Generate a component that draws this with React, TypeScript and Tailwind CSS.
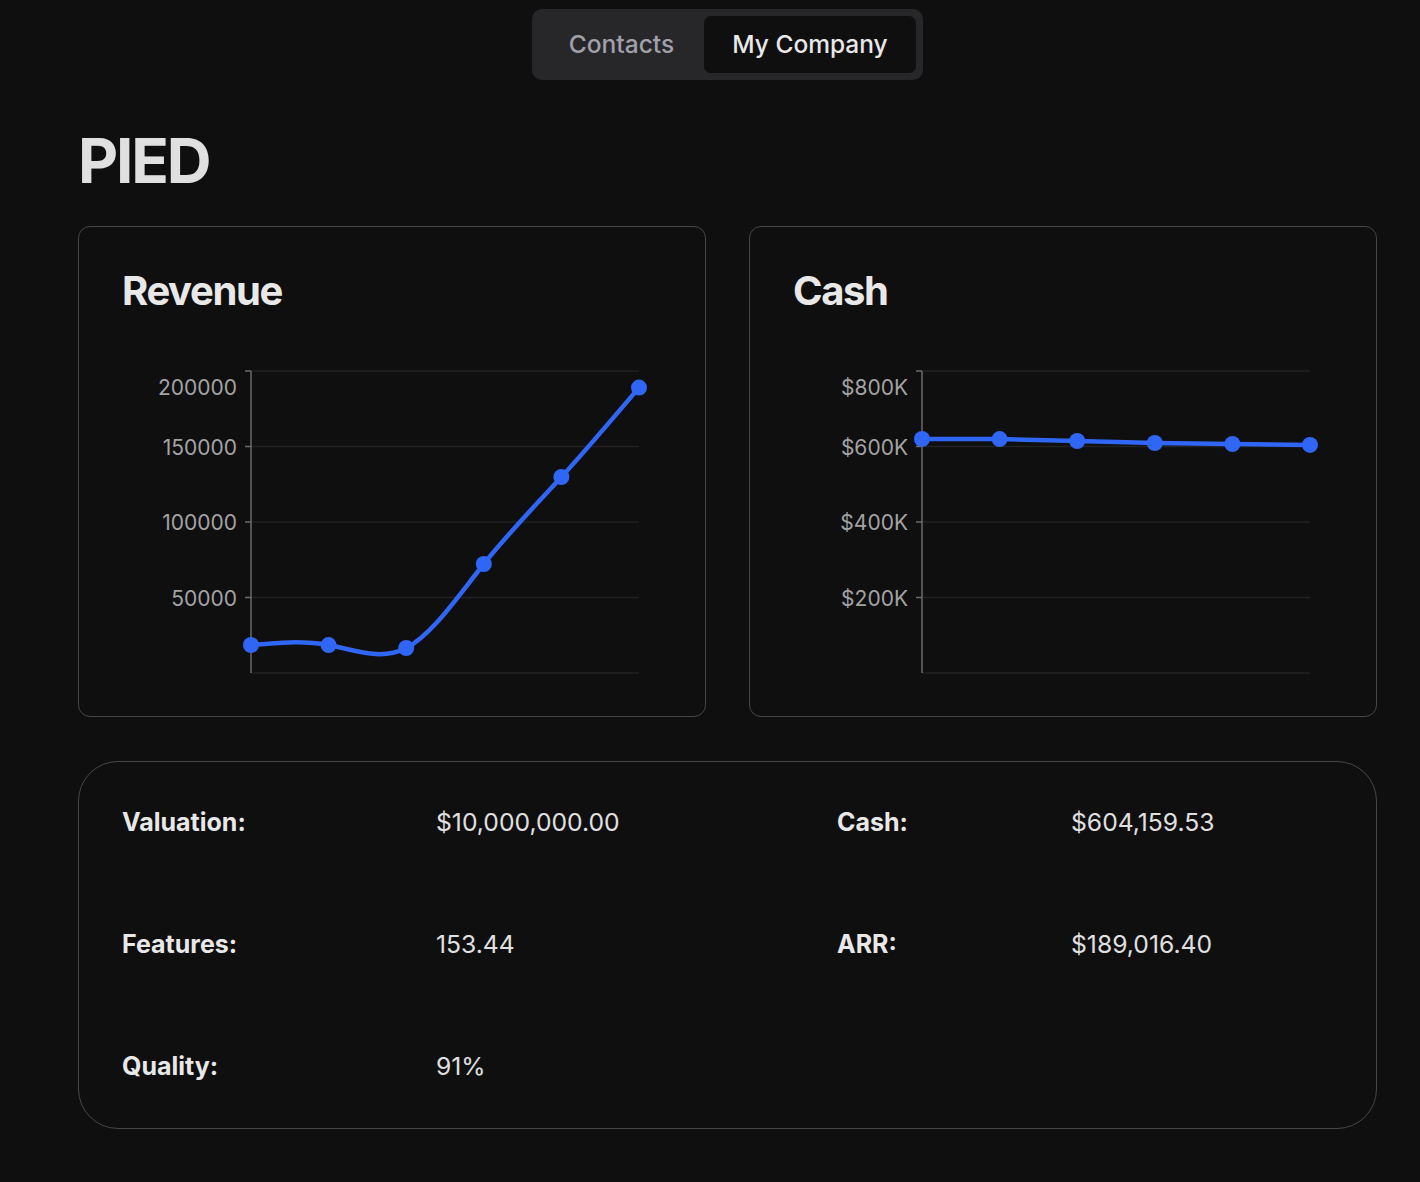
import React from "react";

const BLUE = "#2f66f5";

function naturalCtrl(x: number[]) {
  const n = x.length - 1;
  const a = new Array(n).fill(0);
  const b = new Array(n).fill(0);
  const r = new Array(n).fill(0);
  a[0] = 0; b[0] = 2; r[0] = x[0] + 2 * x[1];
  for (let i = 1; i < n - 1; ++i) { a[i] = 1; b[i] = 4; r[i] = 4 * x[i] + 2 * x[i + 1]; }
  a[n - 1] = 2; b[n - 1] = 7; r[n - 1] = 8 * x[n - 1] + x[n];
  for (let i = 1; i < n; ++i) { const m = a[i] / b[i - 1]; b[i] -= m; r[i] -= m * r[i - 1]; }
  a[n - 1] = r[n - 1] / b[n - 1];
  for (let i = n - 2; i >= 0; --i) a[i] = (r[i] - a[i + 1]) / b[i];
  b[n - 1] = (x[n] + a[n - 1]) / 2;
  for (let i = 0; i < n - 1; ++i) b[i] = 2 * x[i + 1] - a[i + 1];
  return [a, b];
}

function naturalPath(pts: [number, number][]) {
  const xs = pts.map((p) => p[0]);
  const ys = pts.map((p) => p[1]);
  const [ax, bx] = naturalCtrl(xs);
  const [ay, by] = naturalCtrl(ys);
  let d = `M${xs[0]},${ys[0]}`;
  for (let i = 0; i < xs.length - 1; i++) {
    d += `C${ax[i]},${ay[i]},${bx[i]},${by[i]},${xs[i + 1]},${ys[i + 1]}`;
  }
  return d;
}

function linearPath(pts: [number, number][]) {
  return pts.map((p, i) => `${i === 0 ? "M" : "L"}${p[0]},${p[1]}`).join("");
}

const X0 = 129;
const X1 = 517;
const Y0 = 10;
const Y1 = 312;

function Chart({
  values,
  max,
  labels,
  curve,
}: {
  values: number[];
  max: number;
  labels: { text: string; tickY: number; labelY: number }[];
  curve: "natural" | "linear";
}) {
  const step = (X1 - X0) / (values.length - 1);
  const pts: [number, number][] = values.map((v, i) => [X0 + i * step, Y1 - (v / max) * (Y1 - Y0)]);
  const d = curve === "natural" ? naturalPath(pts) : linearPath(pts);
  const grid = [Y0, 85.5, 161, 236.5, Y1];
  return (
    <svg width={560} height={330} className="block mt-[50px]">
      {grid.map((y) => (
        <line key={y} x1={X0} x2={X1} y1={y} y2={y} stroke="#222222" strokeWidth={1.5} />
      ))}
      <line x1={X0} x2={X0} y1={Y0} y2={Y1} stroke="#6b6b6b" strokeWidth={1.5} />
      {labels.map((l) => (
        <g key={l.text}>
          <line x1={X0 - 6} x2={X0} y1={l.tickY} y2={l.tickY} stroke="#6b6b6b" strokeWidth={1.5} />
          <text
            x={X0 - 14}
            y={l.labelY}
            textAnchor="end"
            dominantBaseline="central"
            fill="#a3a3a3"
            fontSize={21}
            fontFamily="Inter, 'Noto Sans', sans-serif"
          >
            {l.text}
          </text>
        </g>
      ))}
      <path d={d} fill="none" stroke={BLUE} strokeWidth={4.5} strokeLinejoin="round" />
      {pts.map((p, i) => (
        <circle key={i} cx={p[0]} cy={p[1]} r={8} fill={BLUE} />
      ))}
    </svg>
  );
}

function ChartCard({ title, children }: { title: string; children: React.ReactNode }) {
  return (
    <div className="h-[491px] rounded-[12px] border border-[#474747] pl-[43px] pt-[44px]">
      <h2 className="text-[40px] leading-[40px] font-bold tracking-[-0.035em] text-[#e8e8e8]">{title}</h2>
      {children}
    </div>
  );
}

export default function App() {
  const revLabels = [
    { text: "200000", tickY: 10, labelY: 26 },
    { text: "150000", tickY: 85.5, labelY: 86 },
    { text: "100000", tickY: 161, labelY: 161 },
    { text: "50000", tickY: 236.5, labelY: 237 },
  ];
  const cashLabels = [
    { text: "$800K", tickY: 10, labelY: 26 },
    { text: "$600K", tickY: 85.5, labelY: 86 },
    { text: "$400K", tickY: 161, labelY: 161 },
    { text: "$200K", tickY: 236.5, labelY: 237 },
  ];
  const rows: [string, string, string, string][] = [
    ["Valuation:", "$10,000,000.00", "Cash:", "$604,159.53"],
    ["Features:", "153.44", "ARR:", "$189,016.40"],
    ["Quality:", "91%", "", ""],
  ];
  return (
    <div
      className="min-h-[1182px] w-full bg-[#0f0f0f] text-[#e6e6e6]"
      style={{ fontFamily: "Inter, 'Noto Sans', sans-serif" }}
    >
      <div className="ml-[78px] w-[1299px] pt-[9px] pb-[52px]">
        <div className="flex justify-center">
          <div className="flex h-[71px] rounded-[10px] bg-[#27272a] p-[7px]">
            <div className="flex w-[165px] items-center justify-center text-[24.5px] font-medium text-[#a1a1aa]">
              Contacts
            </div>
            <div className="flex w-[212px] items-center justify-center rounded-[7px] bg-[#0f0f0f] text-[24.5px] font-medium text-[#e8e8e8]">
              My Company
            </div>
          </div>
        </div>

        <h1 className="mt-[50px] text-[62px] leading-[62px] font-bold tracking-[-0.035em] text-[#e0e0e0]">
          PIED
        </h1>

        <div className="mt-[34px] grid grid-cols-2 gap-[43px]">
          <ChartCard title="Revenue">
            <Chart
              values={[18543, 18500, 16556, 72185, 129801, 189016]}
              max={200000}
              labels={revLabels}
              curve="natural"
            />
          </ChartCard>
          <ChartCard title="Cash">
            <Chart
              values={[619900, 619700, 614600, 609300, 606600, 604160]}
              max={800000}
              labels={cashLabels}
              curve="linear"
            />
          </ChartCard>
        </div>

        <div className="mt-[44px] rounded-[40px] border border-[#474747] px-[43px]">
          {rows.map((r, i) => (
            <div key={i} className="grid h-[122px] grid-cols-[314px_401px_234px_1fr] items-center">
              <div className="text-[25px] font-bold text-[#e8e8e8]">{r[0]}</div>
              <div className="text-[24.7px] text-[#e0e0e0]">{r[1]}</div>
              <div className="text-[25px] font-bold text-[#e8e8e8]">{r[2]}</div>
              <div className="text-[24.7px] text-[#e0e0e0]">{r[3]}</div>
            </div>
          ))}
        </div>
      </div>
    </div>
  );
}
